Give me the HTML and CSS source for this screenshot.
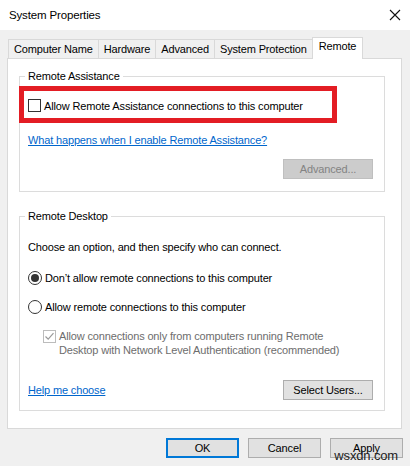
FILE: index.html
```html
<!DOCTYPE html>
<html lang="en">
<head>
    <meta charset="UTF-8">
    <title>System Properties</title>
    <link rel="stylesheet" href="styles.css">
</head>
<body>
    <div class="window">
        <div class="titlebar">
            <span class="title">System Properties</span>
            <svg class="close" width="12" height="12" viewBox="0 0 12 12">
                <path d="M1 1 L11 11 M11 1 L1 11" stroke="#111" stroke-width="1.1" fill="none"/>
            </svg>
        </div>

        <div class="dialog">
            <div class="tabs">
                <div class="tab">Computer Name</div>
                <div class="tab">Hardware</div>
                <div class="tab">Advanced</div>
                <div class="tab">System Protection</div>
                <div class="tab active">Remote</div>
            </div>

            <div class="panel">
                <fieldset class="group">
                    <legend>Remote Assistance</legend>
                    <div class="option highlight">
                        <span class="checkbox"></span>
                        <span>Allow Remote Assistance connections to this computer</span>
                    </div>
                    <a class="link assist-link" href="#">What happens when I enable Remote Assistance?</a>
                    <div class="actions">
                        <button class="btn" disabled>Advanced...</button>
                    </div>
                </fieldset>

                <fieldset class="group desktop">
                    <legend>Remote Desktop</legend>
                    <p class="hint">Choose an option, and then specify who can connect.</p>
                    <div class="option radio-row first">
                        <span class="radio checked"></span>
                        <span>Don’t allow remote connections to this computer</span>
                    </div>
                    <div class="option radio-row">
                        <span class="radio"></span>
                        <span>Allow remote connections to this computer</span>
                    </div>
                    <div class="option nla">
                        <span class="checkbox disabled">
                            <svg width="11" height="11" viewBox="0 0 11 11">
                                <path d="M1.5 5.5 L4.2 8.2 L9.5 2.2" stroke="#9a9a9a" stroke-width="1.2" fill="none"/>
                            </svg>
                        </span>
                        <span>Allow connections only from computers running Remote<br>Desktop with Network Level Authentication (recommended)</span>
                    </div>
                    <div class="actions split">
                        <a class="link" href="#">Help me choose</a>
                        <button class="btn">Select Users...</button>
                    </div>
                </fieldset>
            </div>

            <div class="footer">
                <button class="btn default">OK</button>
                <button class="btn">Cancel</button>
                <button class="btn">Apply</button>
                <span class="watermark">wsxdn.com</span>
            </div>
        </div>
    </div>
</body>
</html>
```

FILE: styles.css
```css
* {
    margin: 0;
    padding: 0;
    box-sizing: border-box;
}

body {
    width: 410px;
    height: 466px;
    background: #f0f0f0;
    font-family: 'Liberation Sans', Arial, sans-serif;
    font-size: 11px;
    line-height: 14px;
    letter-spacing: -0.15px;
    color: #000;
    white-space: nowrap;
    overflow: hidden;
}

.titlebar {
    height: 30px;
    background: #fff;
    display: flex;
    align-items: center;
    justify-content: space-between;
    padding: 0 9px 0 9px;
}

.title {
    font-size: 11.5px;
}

.dialog {
    padding: 7px 8px 0 7px;
}

/* tab strip */
.tabs {
    display: flex;
    align-items: flex-end;
    padding-left: 1px;
    height: 21px;
    position: relative;
    z-index: 1;
}

.tab {
    height: 19px;
    padding: 2px 5px 0 5px;
    border: 1px solid #d9d9d9;
    border-bottom: none;
    margin-right: -1px;
    background: #f0f0f0;
}

.tab.active {
    height: 22px;
    margin-bottom: -1px;
    background: #fff;
    padding-top: 1px;
    padding-left: 6px;
    padding-right: 6px;
}

.panel {
    background: #fff;
    border: 1px solid #d9d9d9;
    padding: 10px 16px 17px 11px;
}

/* group boxes */
.group {
    border: 1px solid #dcdcdc;
    padding: 3px 11px 12px 8px;
}

.group legend {
    margin-left: -3px;
    padding: 0 3px;
    line-height: 14px;
}

.option {
    display: flex;
    align-items: center;
}

.highlight {
    border: 5px solid #e31d24;
    margin-left: -9px;
    width: 318px;
    height: 37px;
    padding: 2px 0 0 4px;
}

.checkbox {
    width: 13px;
    height: 13px;
    border: 1px solid #333;
    background: #fff;
    margin-right: 3px;
    flex-shrink: 0;
    display: flex;
    align-items: center;
    justify-content: center;
}

.checkbox.disabled {
    border-color: #bcbcbc;
}

.link {
    color: #0066cc;
    text-decoration: underline;
}

.assist-link {
    display: block;
    margin-top: 10px;
}

.actions {
    display: flex;
    justify-content: flex-end;
    margin-top: 12px;
}

.actions.split {
    justify-content: space-between;
    align-items: center;
    margin-top: 23px;
}

.btn {
    width: 90px;
    height: 20px;
    font-family: inherit;
    font-size: 11px;
    letter-spacing: -0.15px;
    color: #000;
    background: #e1e1e1;
    border: 1px solid #adadad;
}

.btn:disabled {
    background: #cccccc;
    border-color: #bfbfbf;
    color: #838383;
}

.desktop {
    margin-top: 17px;
    padding-bottom: 10px;
}

.hint {
    margin-top: 14px;
}

.radio-row {
    margin-top: 15px;
}

.radio-row.first {
    margin-top: 17px;
}

.radio {
    width: 14px;
    height: 14px;
    border: 1px solid #333;
    border-radius: 50%;
    margin-right: 3px;
    display: flex;
    align-items: center;
    justify-content: center;
}

.radio.checked::after {
    content: "";
    width: 8px;
    height: 8px;
    border-radius: 50%;
    background: #333;
}

.nla {
    align-items: flex-start;
    margin: 15px 0 0 15px;
    color: #6d6d6d;
}

.nla .checkbox {
    margin-top: 1px;
}

/* dialog buttons */
.footer {
    display: flex;
    justify-content: flex-end;
    gap: 9px;
    margin-top: 9px;
    margin-right: -1px;
    position: relative;
}

.footer .btn {
    width: 73px;
    height: 20px;
}

.footer .btn.default {
    border: 2px solid #0078d7;
}

.watermark {
    position: absolute;
    right: 5px;
    top: 11px;
    font-size: 13px;
    color: #222;
}
```
